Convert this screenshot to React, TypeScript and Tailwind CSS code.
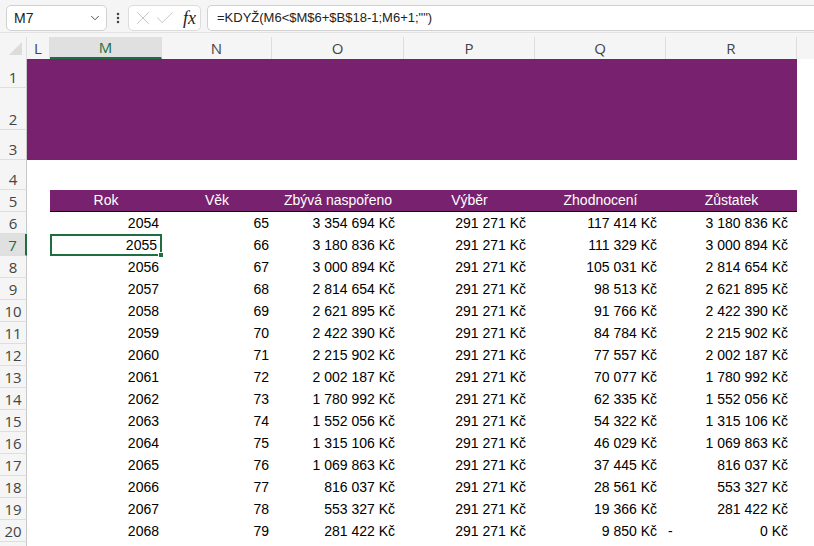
import { ChevronDown, Check, X, EllipsisVertical } from "lucide-react";

const cols = [
  { id: "L", w: "w-[23px]" },
  { id: "M", w: "w-[112px]" },
  { id: "N", w: "w-[110px]" },
  { id: "O", w: "w-[132px]" },
  { id: "P", w: "w-[131px]" },
  { id: "Q", w: "w-[131px]" },
  { id: "R", w: "w-[131px]" },
];

const headers = ["Rok", "Věk", "Zbývá naspořeno", "Výběr", "Zhodnocení", "Zůstatek"];

const rows: [number, number, string, string, string, string][] = [
  [2054, 65, "3 354 694 Kč", "291 271 Kč", "117 414 Kč", "3 180 836 Kč"],
  [2055, 66, "3 180 836 Kč", "291 271 Kč", "111 329 Kč", "3 000 894 Kč"],
  [2056, 67, "3 000 894 Kč", "291 271 Kč", "105 031 Kč", "2 814 654 Kč"],
  [2057, 68, "2 814 654 Kč", "291 271 Kč", "98 513 Kč", "2 621 895 Kč"],
  [2058, 69, "2 621 895 Kč", "291 271 Kč", "91 766 Kč", "2 422 390 Kč"],
  [2059, 70, "2 422 390 Kč", "291 271 Kč", "84 784 Kč", "2 215 902 Kč"],
  [2060, 71, "2 215 902 Kč", "291 271 Kč", "77 557 Kč", "2 002 187 Kč"],
  [2061, 72, "2 002 187 Kč", "291 271 Kč", "70 077 Kč", "1 780 992 Kč"],
  [2062, 73, "1 780 992 Kč", "291 271 Kč", "62 335 Kč", "1 552 056 Kč"],
  [2063, 74, "1 552 056 Kč", "291 271 Kč", "54 322 Kč", "1 315 106 Kč"],
  [2064, 75, "1 315 106 Kč", "291 271 Kč", "46 029 Kč", "1 069 863 Kč"],
  [2065, 76, "1 069 863 Kč", "291 271 Kč", "37 445 Kč", "816 037 Kč"],
  [2066, 77, "816 037 Kč", "291 271 Kč", "28 561 Kč", "553 327 Kč"],
  [2067, 78, "553 327 Kč", "291 271 Kč", "19 366 Kč", "281 422 Kč"],
  [2068, 79, "281 422 Kč", "291 271 Kč", "9 850 Kč", "0 Kč"],
];

function RowHead({ n, h, selected }: { n?: number; h: string; selected?: boolean }) {
  return (
    <div
      className={`${h} w-[27px] shrink-0 flex items-end justify-center pb-[2px] text-[15px] leading-none border-b border-[#dedede] ${
        selected
          ? "bg-[#e0e0e0] text-[#1e6e42] border-r-2 border-r-[#1e6e42]"
          : "bg-[#f5f5f5] text-[#444] border-r border-r-[#c9c9c9]"
      }`}
      style={{ fontFamily: "'Open Sans', sans-serif" }}
    >
      {n}
    </div>
  );
}

export default function App() {
  return (
    <div
      className="w-[814px] h-[546px] overflow-hidden bg-white text-black"
      style={{ fontFamily: "'Liberation Sans', Arial, sans-serif" }}
    >
      {/* formula bar */}
      <div className="h-[33px] bg-[#f5f5f5] border-b border-[#e3e3e3] flex items-start pt-[5px] pl-[6px]">
        <div className="w-[101px] h-[26px] bg-white border border-[#d1d1d1] rounded-[5px] flex items-center pl-[7px] pr-[4px] text-[14px] text-[#222]">
          <span className="flex-1">M7</span>
          <ChevronDown size={14} strokeWidth={1.6} className="text-[#444]" />
        </div>
        <div className="w-[21px] h-[26px] flex items-center justify-center text-[#444]">
          <EllipsisVertical size={14} strokeWidth={2.4} />
        </div>
        <div className="w-[73px] h-[26px] bg-white border border-[#dcdcdc] rounded-[5px] flex items-center pl-[3px]">
          <X size={22} strokeWidth={0.9} className="text-[#b8b8b8]" />
          <Check size={22} strokeWidth={0.9} className="text-[#b8b8b8]" />
          <span
            className="ml-[7px] text-[18px] leading-none italic text-[#222]"
            style={{ fontFamily: "'Liberation Serif', serif" }}
          >
            fx
          </span>
        </div>
        <div className="ml-[6px] flex-1 h-[26px] bg-white border border-[#d1d1d1] border-r-0 rounded-l-[5px] flex items-center pl-[9px] text-[13px] text-[#222]">
          =KDYŽ(M6&lt;$M$6+$B$18-1;M6+1;"")
        </div>
      </div>

      {/* column headers */}
      <div className="h-[26px] bg-[#f5f5f5] flex items-end">
        <div className="w-[27px] h-[22px] shrink-0 relative border-r border-[#dedede]">
          <div className="absolute right-[4px] bottom-[4px] w-0 h-0 border-l-[13px] border-l-transparent border-b-[13px] border-b-[#dcdcdc]" />
        </div>
        {cols.map((c) => (
          <div
            key={c.id}
            className={`${c.w} h-[22px] shrink-0 flex items-center justify-center text-[15px] border-r border-[#dedede] ${
              c.id === "M" ? "bg-[#e0e0e0] text-[#1e6e42] border-b-2 border-b-[#1e6e42]" : "text-[#444]"
            }`}
            style={{ fontFamily: "'Open Sans', sans-serif" }}
          >
            {c.id}
          </div>
        ))}
        <div className="flex-1 h-[22px]" />
      </div>

      {/* rows 1-3: banner */}
      <div className="flex">
        <div className="flex flex-col">
          <RowHead n={1} h="h-[29px]" />
          <RowHead n={2} h="h-[42px]" />
          <RowHead n={3} h="h-[30px]" />
        </div>
        <div className="w-[770px] h-[101px] bg-[#78216e]" />
      </div>

      {/* row 4 */}
      <div className="flex">
        <RowHead n={4} h="h-[30px]" />
      </div>

      {/* row 5: table header */}
      <div className="flex">
        <RowHead n={5} h="h-[22px]" />
        <div className="w-[23px]" />
        <div className="flex h-[22px] bg-[#78216e] border-b border-black text-white text-[14px]">
          {headers.map((t, i) => (
            <div key={t} className={`${cols[i + 1].w} flex items-center justify-center`}>
              {t}
            </div>
          ))}
        </div>
      </div>

      {/* data rows */}
      {rows.map((r, i) => {
        const n = i + 6;
        const sel = n === 7;
        return (
          <div key={n} className="flex">
            <RowHead n={n} h="h-[22px]" selected={sel} />
            <div className="w-[23px]" />
            <div className="flex h-[22px] text-[14px] items-center">
              <div
                className={`w-[112px] h-[22px] relative flex items-center justify-end pr-[3px] ${
                  sel ? "border-2 border-[#1e6e42]" : ""
                }`}
              >
                {r[0]}
                {sel && (
                  <div className="absolute right-[-4px] bottom-[-4px] w-[6px] h-[6px] bg-[#1e6e42] border border-white" />
                )}
              </div>
              <div className="w-[110px] flex justify-end pr-[3px]">{r[1]}</div>
              <div className="w-[132px] flex justify-end pr-[9px]">{r[2]}</div>
              <div className="w-[131px] flex justify-end pr-[9px]">{r[3]}</div>
              <div className="w-[131px] flex justify-end pr-[9px]">{r[4]}</div>
              <div className="w-[131px] flex justify-between pl-[2px] pr-[9px]">
                <span>{r[5] === "0 Kč" ? "-" : ""}</span>
                <span>{r[5]}</span>
              </div>
            </div>
          </div>
        );
      })}
      <div className="flex">
        <RowHead h="h-[22px]" />
      </div>
    </div>
  );
}
